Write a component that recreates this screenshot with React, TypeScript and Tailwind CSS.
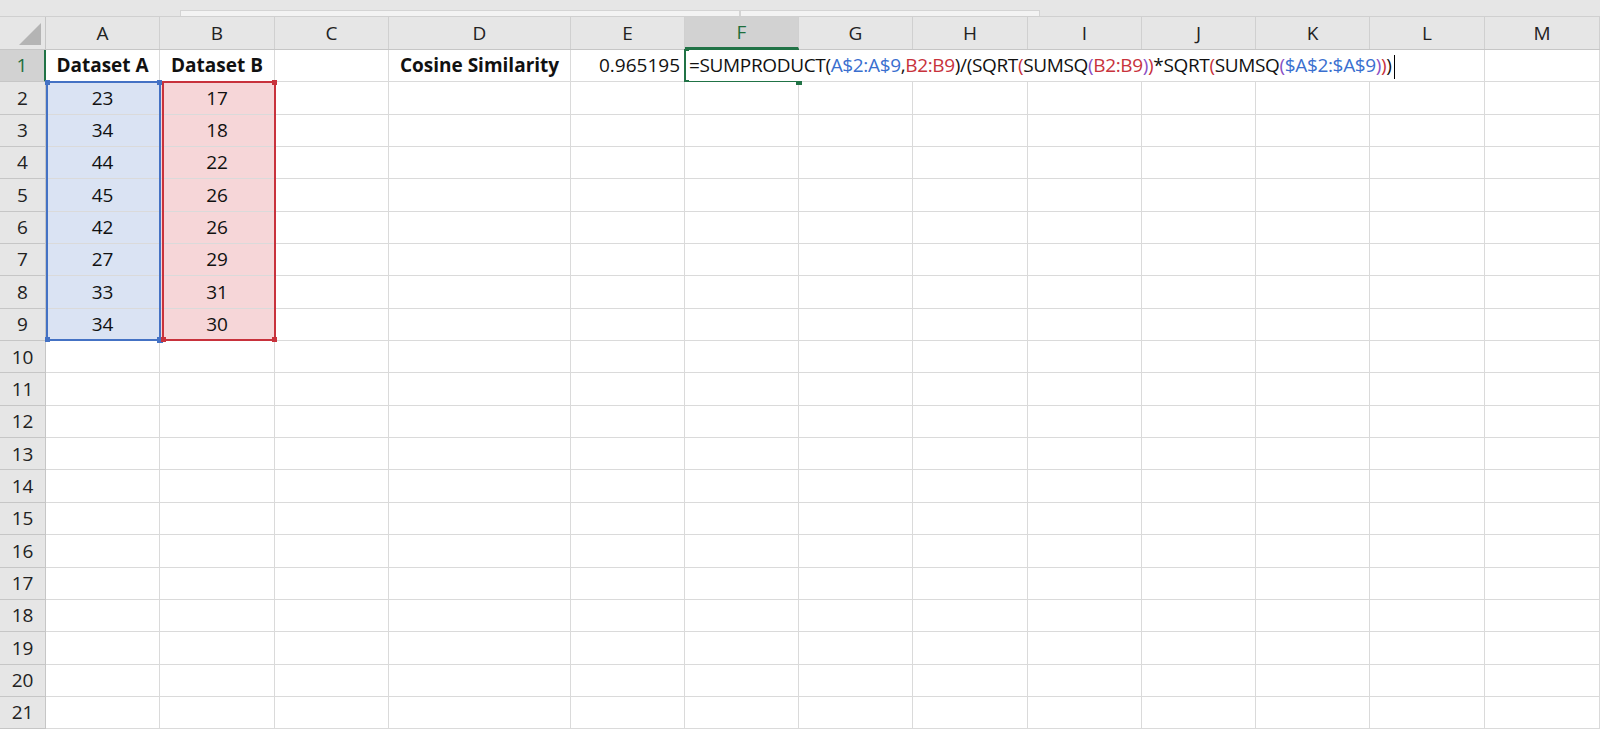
import React from "react";

const cols = ["A","B","C","D","E","F","G","H","I","J","K","L","M"];
const widths = [46,114,115,114,182,114,114,114,115,114,114,114,115,115];
const tmpl = "grid grid-cols-[46px_114px_115px_114px_182px_114px_114px_114px_115px_114px_114px_114px_115px_115px]";
const A = [23,34,44,45,42,27,33,34];
const B = [17,18,22,26,26,29,31,30];
const RH = 32.35;

const blue = "text-[#3a6fcf]";
const red = "text-[#c8323c]";
const purple = "text-[#8a4fc4]";

function Formula() {
  return (
    <span>
      =SUMPRODUCT(<span className={blue}>A$2:A$9</span>,<span className={red}>B2:B9</span>)/(SQRT
      <span className={red}>(</span>SUMSQ<span className={purple}>(</span>
      <span className={red}>B2:B9</span><span className={purple}>)</span><span className={red}>)</span>*SQRT
      <span className={red}>(</span>SUMSQ<span className={purple}>(</span>
      <span className={blue}>$A$2:$A$9</span><span className={purple}>)</span><span className={red}>)</span>)
      <span className="inline-block w-[1.5px] h-[24px] bg-black align-middle ml-[2px]" />
    </span>
  );
}

export default function App() {
  const rows = Array.from({ length: 21 }, (_, i) => i + 1);
  return (
    <div className="w-[1600px] h-[746px] overflow-hidden bg-white relative" style={{ fontFamily: "'Open Sans','Noto Sans',sans-serif" }}>
      <div className="h-[17px] bg-[#e6e6e6] flex items-end border-b border-[#d0d0d0]">
        <div className="ml-[180px] w-[560px] h-[6px] bg-[#f3f3f3] border border-b-0 border-[#d4d4d4]" />
        <div className="ml-[0px] w-[300px] h-[6px] bg-[#f3f3f3] border border-b-0 border-[#d4d4d4]" />
      </div>
      <div className={`${tmpl} h-[33px] bg-[#e6e6e6] border-b border-[#c6c6c6]`}>
        <div className="relative border-r border-[#c6c6c6]">
          <div className="absolute right-[4px] bottom-[4px] w-0 h-0 border-l-[22px] border-l-transparent border-b-[22px] border-b-[#b4b4b4]" />
        </div>
        {cols.map((c) => (
          <div key={c} className={`flex items-center justify-center text-[19px] border-r border-[#d0d0d0] ${c === "F" ? "bg-[#d2d2d2] text-[#1e6e3c] border-b-2 border-b-[#217346]" : "text-[#222]"}`}>{c}</div>
        ))}
      </div>
      <div className="relative">
        {rows.map((r) => (
          <div key={r} className={tmpl} style={{ height: RH }}>
            <div className={`flex items-center justify-center text-[19px] border-r border-b border-[#c6c6c6] ${r === 1 ? "bg-[#d2d2d2] text-[#1e6e3c] border-r-2 border-r-[#217346]" : "bg-[#e6e6e6] text-[#222]"}`}>{r}</div>
            {cols.map((c) => {
              let content: React.ReactNode = null;
              let cls = "";
              if (r === 1 && c === "A") { content = "Dataset A"; cls = "font-bold justify-center"; }
              if (r === 1 && c === "B") { content = "Dataset B"; cls = "font-bold justify-center"; }
              if (r === 1 && c === "D") { content = "Cosine Similarity"; cls = "font-bold justify-center"; }
              if (r === 1 && c === "E") { content = "0.965195"; cls = "justify-end pr-[4px]"; }
              if (r >= 2 && r <= 9 && c === "A") { content = A[r - 2]; cls = "justify-center bg-[#dae3f3]"; }
              if (r >= 2 && r <= 9 && c === "B") { content = B[r - 2]; cls = "justify-center bg-[#f6d6d8]"; }
              const isF1 = r === 1 && c === "F";
              return (
                <div key={c} className={`relative flex items-center text-[19px] text-[#111] whitespace-nowrap border-r border-b border-[#dadada] ${cls} ${isF1 ? "overflow-visible z-10" : "overflow-hidden"}`}>
                  {isF1 ? (
                    <>
                      <div className="absolute inset-[-1px] border-2 border-[#217346] pointer-events-none" />
                      <div className="absolute right-[-4px] bottom-[-4px] w-[6px] h-[6px] bg-[#217346]" />
                      <div className="absolute left-[4px] top-0 bottom-0 flex items-center bg-white pr-1 tracking-[-0.35px]"><Formula /></div>
                    </>
                  ) : content}
                </div>
              );
            })}
          </div>
        ))}
        <div className="absolute border-2 border-[#4472c4] pointer-events-none" style={{ left: 46, top: RH - 1, width: 115, height: RH * 8 + 1 }}>
          <div className="absolute w-[5px] h-[5px] bg-[#4472c4] -left-[3px] -top-[3px]" />
          <div className="absolute w-[5px] h-[5px] bg-[#4472c4] -right-[3px] -top-[3px]" />
          <div className="absolute w-[5px] h-[5px] bg-[#4472c4] -left-[3px] -bottom-[3px]" />
          <div className="absolute w-[6px] h-[6px] bg-[#4472c4] -right-[4px] -bottom-[4px]" />
        </div>
        <div className="absolute border-2 border-[#c8323c] pointer-events-none" style={{ left: 162, top: RH - 1, width: 114, height: RH * 8 + 1 }}>
          <div className="absolute w-[5px] h-[5px] bg-[#c8323c] -right-[3px] -top-[3px]" />
          <div className="absolute w-[5px] h-[5px] bg-[#c8323c] -right-[3px] -bottom-[3px]" />
          <div className="absolute w-[5px] h-[5px] bg-[#c8323c] -left-[3px] -bottom-[3px]" />
        </div>
      </div>
    </div>
  );
}
